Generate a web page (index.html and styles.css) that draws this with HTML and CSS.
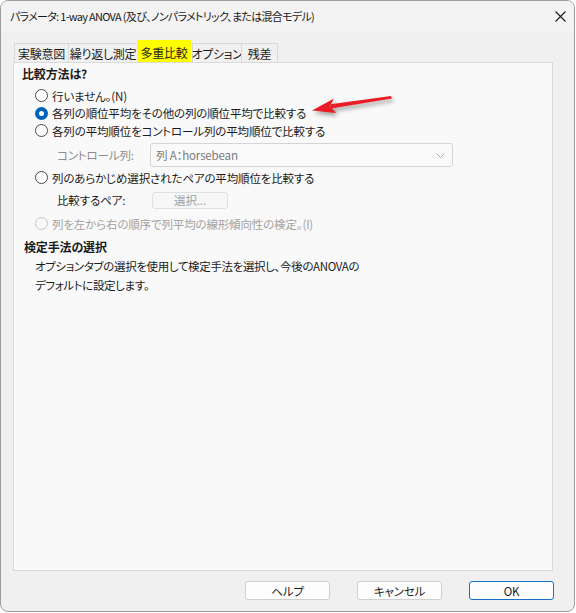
FILE: index.html
```html
<!DOCTYPE html>
<html lang="ja">
<head>
<meta charset="utf-8">
<link rel="stylesheet" href="styles.css">
</head>
<body>
<div class="window">
  <div class="titlebar">
    <span class="title">パラメータ: 1-way ANOVA (及び、ノンパラメトリック、または混合モデル)</span>
    <svg class="close" width="11" height="11" viewBox="0 0 11 11"><path d="M0.5 0.5 L10.5 10.5 M10.5 0.5 L0.5 10.5" stroke="#1a1a1a" stroke-width="1.1" fill="none"/></svg>
  </div>
  <div class="body">
    <div class="tabs">
      <div class="tab t1">実験意図</div>
      <div class="tab t2">繰り返し測定</div>
      <div class="tab sel t3">多重比較</div>
      <div class="tab t4">オプション</div>
      <div class="tab t5">残差</div>
    </div>
    <div class="panel">
      <div class="h h1">比較方法は?</div>
      <div class="row"><span class="radio"></span><span>行いません。(N)</span></div>
      <div class="row"><span class="radio on"></span><span>各列の順位平均をその他の列の順位平均で比較する</span></div>
      <div class="row"><span class="radio"></span><span>各列の平均順位をコントロール列の平均順位で比較する</span></div>
      <div class="ctrl">
        <span class="lbl gray">コントロール列:</span>
        <div class="combo"><span>列 A：horsebean</span>
          <svg width="9" height="5" viewBox="0 0 9 5"><path d="M0.5 0.5 L4.5 4.5 L8.5 0.5" stroke="#a8a8a8" fill="none"/></svg>
        </div>
      </div>
      <div class="row r4"><span class="radio"></span><span>列のあらかじめ選択されたペアの平均順位を比較する</span></div>
      <div class="pair">
        <span class="lbl">比較するペア:</span>
        <div class="pbtn">選択...</div>
      </div>
      <div class="row r5 dis"><span class="radio"></span><span>列を左から右の順序で列平均の線形傾向性の検定。(I)</span></div>
      <div class="h h2">検定手法の選択</div>
      <p class="desc">オプションタブの選択を使用して検定手法を選択し、今後のANOVAの<br>デフォルトに設定します。</p>
    </div>
    <div class="buttons">
      <div class="btn">ヘルプ</div>
      <div class="btn">キャンセル</div>
      <div class="btn ok">OK</div>
    </div>
  </div>
  <svg class="arrow" width="576" height="613" viewBox="0 0 576 613">
    <g class="arrow-g">
      <path d="M391 96 L392 98.5 L331 108.6 L330.4 104.2 Z" fill="#ec1c24"/>
      <path d="M312 110.5 L334 98.5 L330 106 L336 113 Z" fill="#ec1c24"/>
    </g>
  </svg>
</div>
</body>
</html>
```

FILE: styles.css
```css
* { box-sizing: border-box; }
html, body { margin: 0; padding: 0; }
body {
  width: 576px;
  height: 613px;
  background: #ffffff;
  font-family: "Noto Sans CJK JP", "Noto Sans", sans-serif;
  font-size: 11.5px;
  letter-spacing: -0.15px;
  font-feature-settings: "palt";
  color: #1b1b1b;
  overflow: hidden;
}
.window {
  position: relative;
  width: 575px;
  height: 612px;
  border: 1px solid #9c9c9c;
  border-radius: 8px;
  background: #f0f0f0;
  overflow: hidden;
}
.titlebar {
  height: 30px;
  background: #f3f3f3;
  display: flex;
  align-items: center;
  justify-content: space-between;
  padding: 0 8px 0 9px;
}
.title { font-size: 11px; letter-spacing: -0.7px; white-space: nowrap; }
.body { padding: 9px 0 0 12px; }
.tabs {
  display: flex;
  align-items: flex-end;
  height: 22px;
  padding-left: 1px;
}
.tab {
  flex: none;
  white-space: nowrap;
  height: 19px;
  border: 1px solid #d9d9d9;
  border-bottom: none;
  background: #f0f0f0;
  display: flex;
  align-items: center;
  justify-content: center;
  margin-right: -1px;
  font-size: 12px;
  letter-spacing: -0.3px;
}
.t1 { width: 55px; }
.t2 { width: 70px; }
.t3 { width: 54px; }
.t4 { width: 50px; margin-left: 1px; }
.t5 { width: 37px; }
.tab.sel {
  height: 22px;
  background: #ffff00;
  border-color: #ffff00;
  position: relative;
  z-index: 1;
  padding-top: 1px;
  margin-right: 0;
}
.panel {
  width: 540px;
  height: 509px;
  border: 1px solid #dadada;
  background: #f9f9f9;
}
.h { font-weight: bold; font-size: 12px; }
.h1 { height: 24px; line-height: 22px; padding-left: 8px; }
.row {
  height: 17.5px;
  display: flex;
  align-items: center;
  padding-left: 21px;
  white-space: nowrap;
}
.radio {
  width: 13px;
  height: 13px;
  border: 1px solid #4a4a4a;
  border-radius: 50%;
  background: #ffffff;
  margin-right: 4px;
  flex: none;
}
.radio.on {
  border: 4px solid #0060be;
  background: #ffffff;
}
.dis { color: #a2a2a2; }
.dis .radio { border-color: #c4c4c4; background: #f9f9f9; }
.ctrl {
  margin-top: 3.5px;
  height: 24px;
  display: flex;
  align-items: center;
  padding-left: 43px;
}
.lbl { width: 93px; flex: none; white-space: nowrap; }
.gray { color: #8c8c8c; }
.combo {
  width: 303px;
  height: 24px;
  border: 1px solid #d4d4d4;
  border-radius: 3px;
  background: #fafafa;
  display: flex;
  align-items: center;
  justify-content: space-between;
  padding: 0 7px 0 5px;
  color: #7a7a7a;
}
.r4 { margin-top: 2px; }
.pair {
  margin-top: 5.5px;
  height: 16px;
  display: flex;
  align-items: center;
  padding-left: 43px;
}
.pair .lbl { width: 95px; }
.pbtn {
  width: 76px;
  height: 17px;
  border: 1px solid #e0e0e0;
  border-radius: 3px;
  background: #f7f7f7;
  color: #a0a0a0;
  display: flex;
  align-items: center;
  justify-content: center;
}
.r5 { margin-top: 7px; }
.h2 { margin-top: 4.5px; height: 20px; line-height: 20px; padding-left: 10px; }
.desc {
  margin: 0;
  padding-left: 21px;
  line-height: 19px;
  letter-spacing: -0.35px;
}
.buttons {
  margin-top: 10px;
  display: flex;
  padding-left: 232px;
  gap: 27px;
}
.btn {
  width: 85px;
  height: 19px;
  border: 1px solid #cfcfcf;
  border-radius: 3px;
  background: #fdfdfd;
  display: flex;
  align-items: center;
  justify-content: center;
}
.btn.ok { border: 1.5px solid #1a6fc4; }
.arrow {
  position: absolute;
  left: -1px;
  top: -1px;
  pointer-events: none;
}
.arrow-g { filter: drop-shadow(2px 3px 2px rgba(0,0,0,0.35)); }
```
